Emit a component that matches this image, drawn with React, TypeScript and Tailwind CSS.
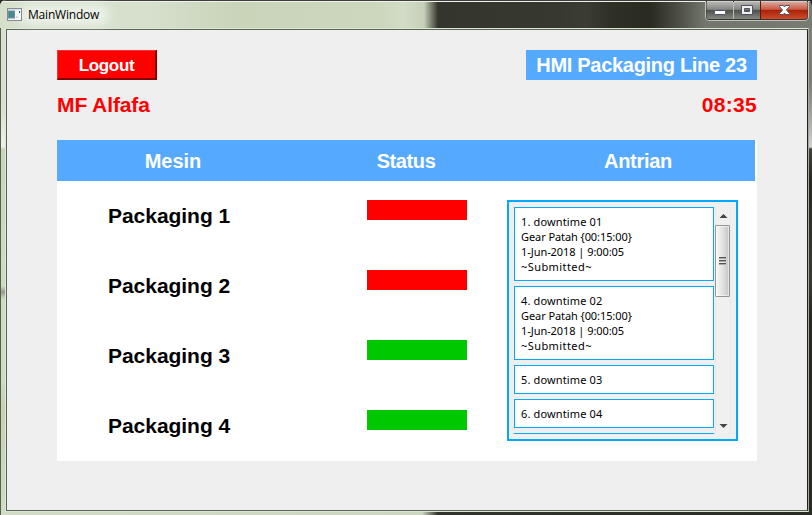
const machines = [
  { name: 'Packaging 1', running: false },
  { name: 'Packaging 2', running: false },
  { name: 'Packaging 3', running: true },
  { name: 'Packaging 4', running: true },
];

const queue = [
  ['1. downtime 01', 'Gear Patah {00:15:00}', '1-Jun-2018 | 9:00:05', '~Submitted~'],
  ['4. downtime 02', 'Gear Patah {00:15:00}', '1-Jun-2018 | 9:00:05', '~Submitted~'],
  ['5. downtime 03'],
  ['6. downtime 04'],
];

const lineSpacing = ['tracking-[0.13px]', 'tracking-[-0.08px]', 'tracking-[-0.06px]', 'tracking-[0.42px]'];

function WindowButtons() {
  return (
    <svg className="absolute -top-px right-[2px] h-[22px] w-[106px]" viewBox="0 0 106 22">
      <defs>
        <linearGradient id="gray" x2="0" y2="1">
          <stop offset="0" stopColor="#b5b6b2" />
          <stop offset=".43" stopColor="#858681" />
          <stop offset=".5" stopColor="#50524c" />
          <stop offset="1" stopColor="#858880" />
        </linearGradient>
        <linearGradient id="red" x2="0" y2="1">
          <stop offset="0" stopColor="#dda79b" />
          <stop offset=".43" stopColor="#c75b45" />
          <stop offset=".5" stopColor="#aa2308" />
          <stop offset="1" stopColor="#cf4b2c" />
        </linearGradient>
      </defs>
      <path d="M1.500 1V17Q1.500 20.500 5 20.500H101Q104.500 20.500 104.500 17V1" fill="#35362f" stroke="#c0c1bd" />
      <path d="M2.500 2H29V19H5Q2.500 19 2.500 16Z" fill="url(#gray)" />
      <path d="M30 2H56V19H30Z" fill="url(#gray)" />
      <path d="M57 2H103.500V16Q103.500 19 100 19H57Z" fill="url(#red)" />
      <path d="M29.500 2V19" stroke="#bdbdba" />
      <path d="M56.500 2V19" stroke="#681406" />
      <path d="M3 1.500H29M30 1.500H56M57 1.500H103" stroke="#d0d0cd" />
      <rect x="10.500" y="10.500" width="11" height="4" rx="1" fill="#fff" stroke="#505066" />
      <path d="M37.500 5.500H48.500V14.500H37.500ZM40.500 8.500V11.500H45.500V8.500Z" fill="#eee" fillRule="evenodd" stroke="#505066" />
      <path d="M75.500 5.500H79.500L80.500 7L81.500 5.500H85.500V6.500L82.500 10L85.500 13.500V14.500H81.500L80.500 13L79.500 14.500H75.500V13.500L78.500 10L75.500 6.500Z" fill="#fff" stroke="#50505f" />
    </svg>
  );
}

function TitleBar() {
  return (
    <header className="relative flex h-[28px] items-center border-t border-[#403d40] bg-[linear-gradient(90deg,#d5dfca_0,#d6e0cd_150px,#c9d4b9_235px,#ccd7be_380px,#d2dcc6_403px,#c7d1b9_424px,#7c8371_431px,#34352c_438px,#373930_560px,#3b3d34_585px,#2f3127_610px,#292b21_650px,#484a41_675px,#73766d_705px,#777b72_812px)] pl-[7px] shadow-[inset_0_1px_#edf1e9]">
      <div className="absolute left-[18px] top-[4px] h-[20px] w-[92px] rounded-full bg-white/60 blur-[6px]" />
      <svg className="relative h-[13px] w-[15px] shrink-0" viewBox="0 0 15 13">
        <rect x=".5" y=".5" width="14" height="12" fill="#f5f7f7" stroke="#858c99" />
        <path d="M1 1.500H14" stroke="#d8dee4" />
        <rect x="1.500" y="3" width="6" height="7" fill="#438d8c" stroke="#718da1" />
        <rect x="9" y="8" width="2" height="2" fill="#d6dadd" />
        <path d="M12.500 3V5" stroke="#334264" />
      </svg>
      <span className="relative ml-[6px] font-['Open_Sans','Noto_Sans',sans-serif] text-[12px] leading-[18px] tracking-[-0.2px] text-black">MainWindow</span>
      <WindowButtons />
    </header>
  );
}

function QueueList() {
  return (
    <section className="ml-[40px] mt-[19px] flex h-[241px] w-[231px] border-2 border-[#00aaff] bg-[#efefef] py-[5px] pl-[5px]">
      <div className="flex w-[200px] flex-col gap-[5px] overflow-hidden">
        {queue.map((lines) => (
          <article key={lines[0]} className="shrink-0 border border-[#00aaff] bg-white px-[6px] py-[6px] font-['Noto_Sans','Open_Sans',sans-serif] text-[11px] leading-[15px] text-black">
            {lines.map((line, i) => (
              <p key={i} className={`whitespace-nowrap ${lineSpacing[i]}`}>{line}</p>
            ))}
          </article>
        ))}
        <div className="h-px shrink-0 bg-[#00aaff]" />
      </div>
      <div className="ml-px flex h-[227px] w-[16px] flex-col border-x border-[#e9e9e9] bg-[#f0f0f0]">
        <svg className="h-[18px] w-[14px] shrink-0" viewBox="0 0 14 18">
          <path d="M3.500 11L7.500 7L11.500 11Z" fill="#444" />
        </svg>
        <div className="-ml-px flex h-[72px] w-[15px] shrink-0 flex-col items-center justify-center gap-px rounded-[1px] border border-[#979797] bg-gradient-to-r from-[#f8f8f8] via-[#e2e2e3] to-[#c3c4c6] shadow-[inset_0_0_0_1px_#ffffff80]">
          <i className="h-[2px] w-[7px] border-t border-[#555] bg-[#aaa]" />
          <i className="h-[2px] w-[7px] border-t border-[#555] bg-[#aaa]" />
          <i className="h-[2px] w-[7px] border-t border-[#555] bg-[#aaa]" />
        </div>
        <svg className="mt-auto h-[17px] w-[14px] shrink-0" viewBox="0 0 14 17">
          <path d="M3.500 7H11.500L7.500 11Z" fill="#444" />
        </svg>
      </div>
    </section>
  );
}

export default function App() {
  return (
    <div className="h-[515px] w-[812px] overflow-hidden bg-[#25281e] font-['Liberation_Sans',Arial,sans-serif]">
      <div className="flex h-full flex-col overflow-hidden rounded-t-[6px] bg-[linear-gradient(90deg,#d1dcc5_0,#ccd7bf_422px,#30342b_438px,#292c22_812px)]">
        <TitleBar />
        <div className="flex h-[487px]">
          <div className="w-[5px] shrink-0 border-l border-[#55614b] bg-[linear-gradient(#d7e1ce_0,#d7e1ce_80px,#edf0e9_115px,#edf0e9_119px,#c8d4bc_121px,#d0dcc4_258px,#939c89_264px,#d0dcc4_271px,#d0dcc4_350px,#c5d0b7_380px,#d0dcc4_487px)]" />
          <div className="h-[484px] w-[804px] shrink-0 border border-[#dde5d6] border-r-[#a6aaa1]">
            <div className="h-full w-full border border-[#596655] border-r-[#20231c] bg-[#efefef] pl-[50px] pt-[20px]">
              <div className="flex w-[700px] items-center justify-between">
                <button className="h-[30px] w-[100px] border border-b-2 border-r-2 border-[#ff3030] border-b-[#850000] border-r-[#850000] bg-[#ff0000] pt-[2px] text-[17px] font-bold leading-[25px] tracking-[-0.35px] text-white">Logout</button>
                <h1 className="h-[30px] w-[231px] whitespace-nowrap bg-[#55aaff] text-center text-[20px] font-bold leading-[30px] tracking-[-0.3px] text-white">HMI Packaging Line 23</h1>
              </div>
              <div className="mt-[10px] flex h-[30px] w-[700px] items-center justify-between text-[21px] font-bold text-[#ff0000]">
                <span className="tracking-[-0.1px]">MF Alfafa</span>
                <time className="tracking-[0.3px]">08:35</time>
              </div>
              <main className="mt-[20px] h-[321px] w-[700px] bg-white">
                <div className="grid h-[41px] w-[698px] grid-cols-[232px_234px_232px] items-center bg-[#55aaff] text-center text-[20px] font-bold text-white">
                  <h2>Mesin</h2>
                  <h2 className="tracking-[-0.4px]">Status</h2>
                  <h2 className="pr-[2px] tracking-[-0.3px]">Antrian</h2>
                </div>
                <div className="flex">
                  <div className="w-[410px]">
                    {machines.map(({ name, running }) => (
                      <div key={name} className="flex h-[70px] items-start pl-[51px] pt-[19px]">
                        <span className="w-[259px] pt-px text-[21px] font-bold leading-[30px] tracking-[-0.04px] text-black">{name}</span>
                        <span className={`h-[20px] w-[100px] ${running ? 'bg-[#00c800]' : 'bg-[#ff0000]'}`} />
                      </div>
                    ))}
                  </div>
                  <QueueList />
                </div>
              </main>
            </div>
          </div>
          <div className="flex-1 bg-[linear-gradient(#7c8077_0,#777b72_52px,#9fa19c_85px,#d2d3d1_119px,#3f4138_121px,#25281e_155px,#383a31_250px,#25281e_290px,#292c22_487px)]" />
        </div>
      </div>
    </div>
  );
}
